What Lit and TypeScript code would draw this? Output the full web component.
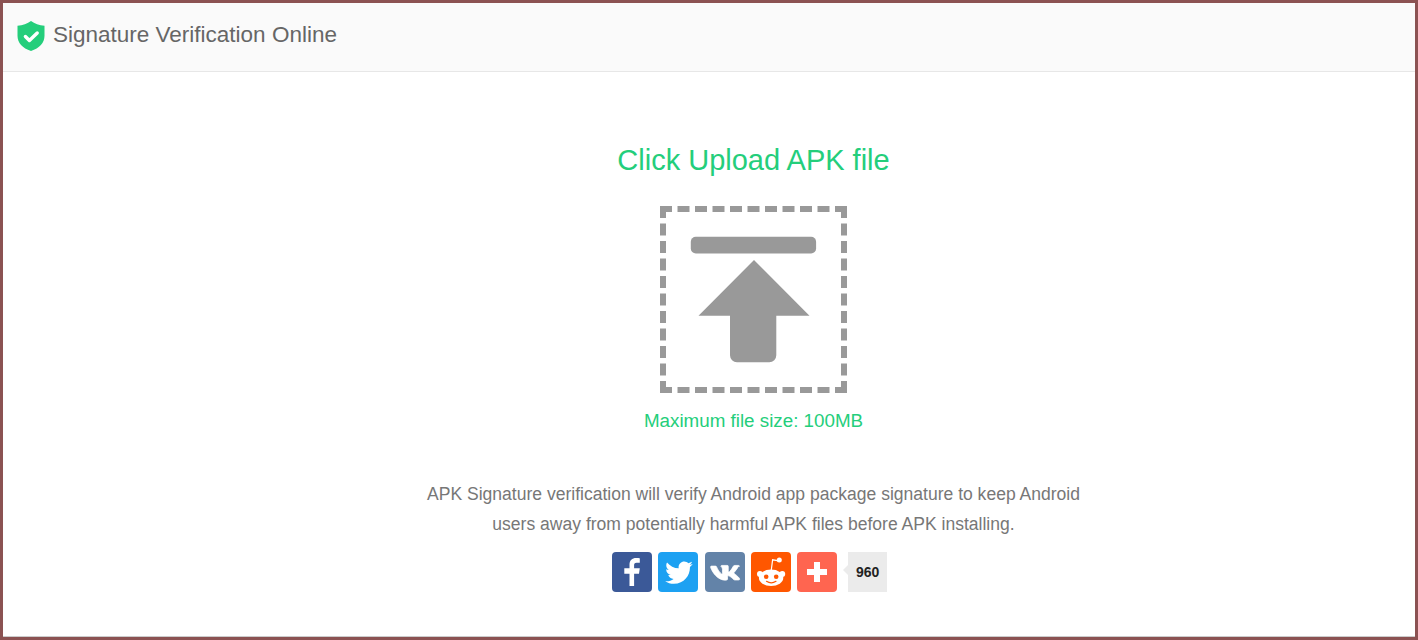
import { LitElement, html, css, svg } from "lit";
import { customElement } from "lit/decorators.js";

const socials = [
  { cls: "fb", icon: svg`<path fill="#fff" d="M22.100 34V21.800h4.900l.8-5.500h-5.700v-3.100c0-1.500.4-2.400 2.500-2.400h3.200V6.300c-.5-.1-2-.3-3.800-.3-3.800 0-6.500 2.300-6.500 6.600v3.700h-5.200v5.500h5.200V34z"/>` },
  { cls: "tw", icon: svg`<g transform="translate(21 20.500) scale(.86) translate(-20 -21)"><path fill="#fff" d="M36 11.200c-1.200.5-2.400.9-3.800 1 1.400-.8 2.400-2.100 2.900-3.600-1.300.8-2.700 1.300-4.200 1.600-1.200-1.300-2.900-2.100-4.800-2.100-3.600 0-6.600 2.900-6.600 6.600 0 .5.100 1 .2 1.500-5.500-.3-10.300-2.900-13.600-6.900-.6 1-.9 2.100-.9 3.300 0 2.300 1.200 4.300 2.900 5.500-1.100 0-2.100-.3-3-.8v.1c0 3.200 2.300 5.800 5.300 6.400-.6.200-1.100.2-1.700.2-.4 0-.8 0-1.200-.1.800 2.600 3.300 4.500 6.200 4.600-2.300 1.800-5.100 2.800-8.200 2.800-.5 0-1.100 0-1.600-.1 2.900 1.900 6.400 3 10.100 3 12.100 0 18.700-10 18.700-18.700v-.9c1.300-.9 2.400-2.100 3.300-3.400z"/></g>` },
  { cls: "vk", icon: svg`<g transform="translate(20 21) scale(1.05 .86) translate(-20.900 -21.100)"><path fill="#fff" stroke="#fff" stroke-width=".8" d="M34.500 13.500c.2-.7 0-1.200-1-1.200h-3.300c-.8 0-1.200.4-1.400 1-.9 2.200-2 4.100-3 5.500-.6.800-1 1.100-1.300 1.100-.2 0-.5-.3-.5-1v-5.400c0-.9-.2-1.200-1-1.200h-5.100c-.5 0-.9.400-.9.800 0 .9 1.300 1.100 1.500 3.500v4.400c0 1-.2 1.200-.5 1.200-1 0-3.500-3.700-5-7.900-.3-.9-.6-1.200-1.400-1.200H8.300c-.9 0-1.100.4-1.100.9 0 .8 1 4.700 4.700 9.900 2.500 3.500 6 5.500 9.200 5.500 1.900 0 2.200-.4 2.200-1.200v-2.700c0-.9.200-1.100.8-1.100.4 0 1.200.2 2.900 1.900 2 2 2.300 2.900 3.400 2.900h3.300c.9 0 1.400-.5 1.100-1.400-.3-.9-1.400-2.200-2.800-3.800-.8-.9-1.900-1.900-2.300-2.400-.5-.6-.3-.9 0-1.400 0 0 3.600-5.100 3.800-6.800z"/></g>` },
  { cls: "rd", icon: svg`<g fill="#fff"><circle cx="8.900" cy="22" r="2.900"/><circle cx="31.300" cy="22" r="2.900"/><ellipse cx="20.100" cy="25.800" rx="12.200" ry="8.300"/><circle cx="28.300" cy="8" r="2.500"/></g><path d="M20.300 18l1.300-10.200 6.500 1" fill="none" stroke="#fff" stroke-width="1.200"/><circle cx="15.200" cy="24.800" r="2.300" fill="#ff5700"/><circle cx="25.200" cy="24.800" r="2.300" fill="#ff5700"/><path d="M15.500 29.300c2.800 1.800 6.700 1.800 9.500 0" fill="none" stroke="#ff5700" stroke-width="1.200" stroke-linecap="round"/>` },
  { cls: "pl", icon: svg`<path fill="#fff" d="M17 10h6v7h7v6h-7v7h-6v-7h-7v-6h7z"/>` },
];

@customElement("app-root")
export class AppRoot extends LitElement {
  static styles = css`
    :host {
      display: flex;
      flex-direction: column;
      box-sizing: border-box;
      height: 640px;
      border: 3px solid #8b5252;
      font-family: "Liberation Sans", Arial, sans-serif;
      background: #fff;
      overflow: hidden;
    }
    .header {
      display: flex;
      align-items: center;
      gap: 8px;
      height: 68px;
      padding-left: 14px;
      background: #fafafa;
      border-bottom: 1px solid #e7e7e7;
    }
    .logo { display: block; width: 28px; height: 30px; margin-top: -2px; }
    .brand { font-size: 22.500px; color: #666; line-height: 30px; margin-top: -5px; }
    .main {
      flex: 1;
      display: flex;
      flex-direction: column;
      align-items: center;
      padding: 71px 0 0 89px;
    }
    .footer { border-top: 1px solid #ccc; }
    h1 {
      margin: 0;
      font-size: 29px;
      font-weight: 400;
      line-height: 34px;
      color: #24ce7b;
    }
    .drop {
      box-sizing: border-box;
      width: 187px;
      height: 187px;
      margin-top: 29px;
      border: 6px dashed #999;
      display: flex;
      align-items: center;
      justify-content: center;
    }
    .drop svg { display: block; width: 175px; height: 175px; }
    .limit {
      margin-top: 17px;
      font-size: 18.800px;
      line-height: 22px;
      color: #24ce7b;
    }
    .desc {
      margin: 47px 0 0;
      width: 700px;
      text-align: center;
      font-size: 17.550px;
      line-height: 30px;
      color: #777;
    }
    .share {
      display: flex;
      align-items: flex-start;
      margin: 13px 8px 0 0;
    }
    .btn {
      width: 40px;
      height: 40px;
      border-radius: 4px;
      margin-right: 6.300px;
      display: block;
    }
    .btn svg { display: block; width: 40px; height: 40px; }
    .fb { background: #3b5998; }
    .tw { background: #1da1f2; }
    .vk { background: #6383a8; }
    .rd { background: #ff5700; }
    .pl { background: #ff6550; margin-right: 0; }
    .count {
      position: relative;
      margin-left: 11px;
      width: 39px;
      height: 40px;
      background: #ebebeb;
      display: flex;
      align-items: center;
      justify-content: center;
      font-size: 14px;
      font-weight: 700;
      color: #222;
      box-sizing: border-box;
    }
    .count::before {
      content: "";
      position: absolute;
      left: -5px;
      top: 13px;
      border-style: solid;
      border-width: 5px 5px 5px 0;
      border-color: transparent #ebebeb transparent transparent;
    }
  `;

  render() {
    return html`
      <div class="header">
        <svg class="logo" viewBox="0 0 28 30">
          <path fill="#24ce7b" d="M14 0C10.500 2.700 5.700 4.300.5 4.700v10C.5 21.700 5.500 27 14 30c8.500-3 13.500-8.300 13.500-15.300v-10C22.300 4.300 17.500 2.700 14 0z"/>
          <path fill="none" stroke="#fff" stroke-width="3.400" stroke-linecap="round" stroke-linejoin="round" d="M8.400 15.500l4 4 7.800-7.500"/>
        </svg>
        <span class="brand">Signature Verification Online</span>
      </div>
      <div class="main">
        <h1>Click Upload APK file</h1>
        <div class="drop">
          <svg viewBox="0 0 175 175">
            <rect x="24.800" y="24.800" width="125.300" height="16.600" rx="5" fill="#999"/>
            <path fill="#999" d="M88 48l55.500 55.700h-33.200v39.600a7 7 0 0 1-7 7H71a7 7 0 0 1-7-7v-39.600H32.500z"/>
          </svg>
        </div>
        <div class="limit">Maximum file size: 100MB</div>
        <p class="desc">APK Signature verification will verify Android app package signature to keep Android<br />users away from potentially harmful APK files before APK installing.</p>
        <div class="share">
          ${socials.map((s) => html`<a class="btn ${s.cls}"><svg viewBox="0 0 40 40">${s.icon}</svg></a>`)}
          <div class="count">960</div>
        </div>
      </div>
      <div class="footer"></div>
    `;
  }
}
